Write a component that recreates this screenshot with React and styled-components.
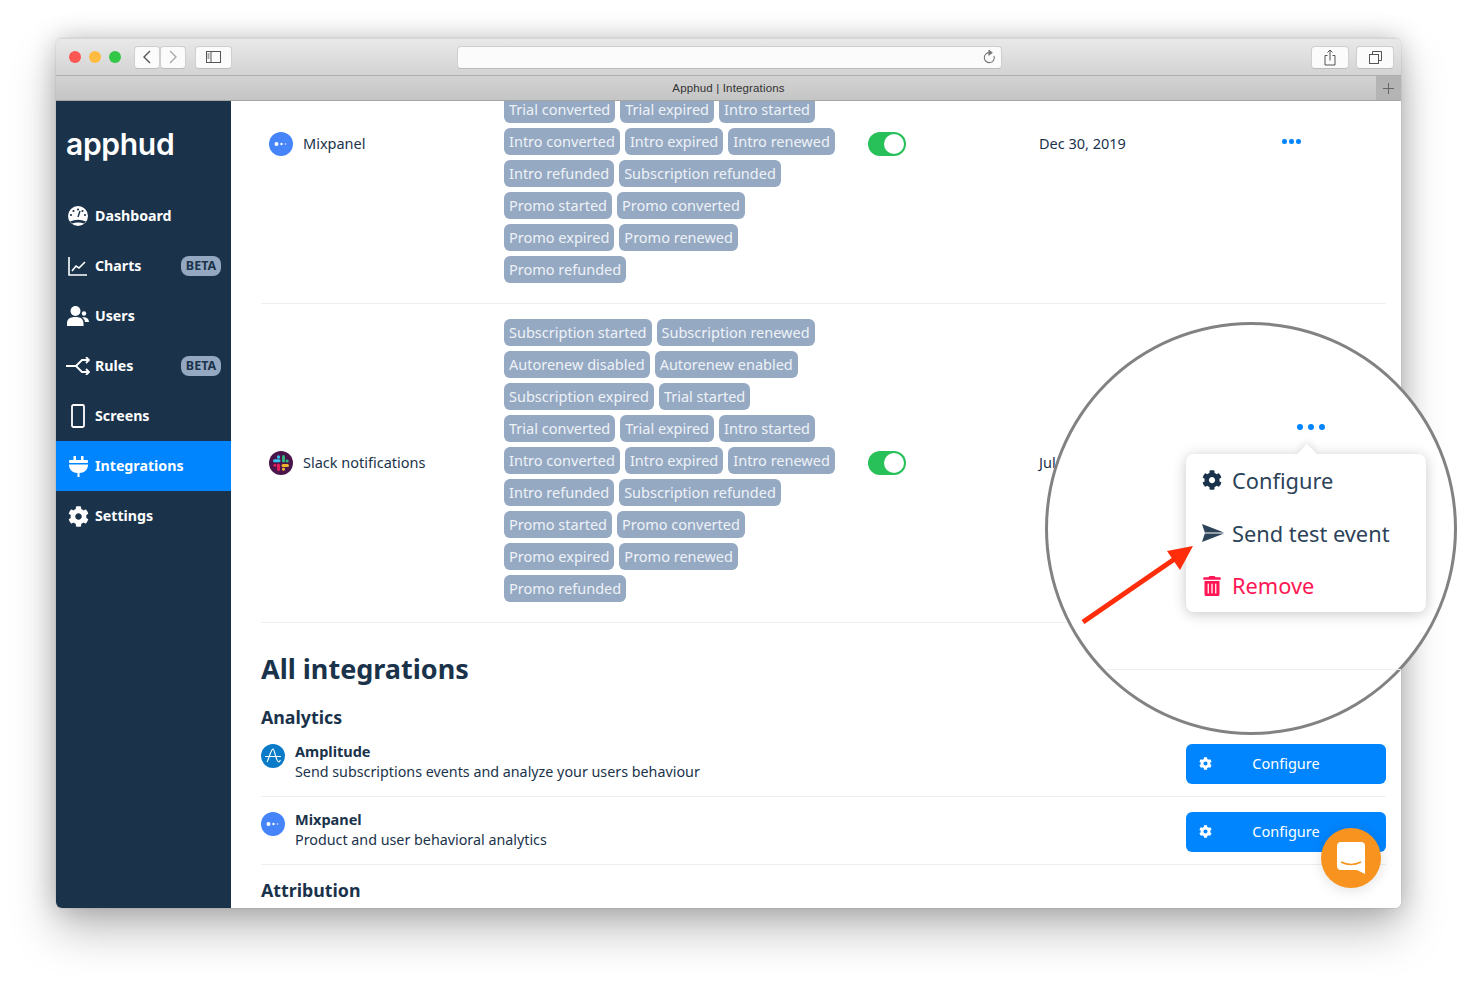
import React from "react";
import styled, { createGlobalStyle } from "styled-components";
import { FaCog, FaTrashAlt } from "react-icons/fa";

const GlobalStyle = createGlobalStyle`
  html, body {
    margin: 0;
    background: #fff;
    overflow: hidden;
  }
  * {
    box-sizing: border-box;
  }
`;

const font = `"Noto Sans", "Open Sans", sans-serif`;
const navy = "#1a334b";
const blue = "#0085ff";

const eventRows = [
  ["Subscription started", "Subscription renewed"],
  ["Autorenew disabled", "Autorenew enabled"],
  ["Subscription expired", "Trial started"],
  ["Trial converted", "Trial expired", "Intro started"],
  ["Intro converted", "Intro expired", "Intro renewed"],
  ["Intro refunded", "Subscription refunded"],
  ["Promo started", "Promo converted"],
  ["Promo expired", "Promo renewed"],
  ["Promo refunded"],
];

const navItems = [
  { label: "Dashboard", icon: <DashboardIcon /> },
  { label: "Charts", icon: <ChartIcon />, beta: true },
  { label: "Users", icon: <UsersIcon /> },
  { label: "Rules", icon: <RulesIcon />, beta: true },
  { label: "Screens", icon: <ScreenIcon /> },
  { label: "Integrations", icon: <PlugIcon />, active: true },
  { label: "Settings", icon: <FaCog size={21} /> },
];

function DashboardIcon() {
  return (
    <svg width="22" height="20" viewBox="0 0 22 20">
      <circle cx="11" cy="10" r="10" fill="#fff" />
      <path d="M3 15.5 Q11 12 19 15.5 L17 17.5 Q11 15.5 5 17.5 Z" fill={navy} />
      <g fill={navy}>
        <circle cx="11" cy="3.5" r="1.1" />
        <circle cx="6.5" cy="5" r="1.1" />
        <circle cx="15.5" cy="5" r="1.1" />
        <circle cx="4" cy="9" r="1.1" />
        <circle cx="18" cy="9" r="1.1" />
      </g>
      <path d="M11 11 L13 5" stroke={navy} strokeWidth="1.4" />
    </svg>
  );
}

function ChartIcon() {
  return (
    <svg width="20" height="20" viewBox="0 0 20 20" fill="none" stroke="#fff" strokeWidth="1.6">
      <path d="M1 1V19H19" />
      <path d="M4 15 L8 10 L11 12 L17 6" />
    </svg>
  );
}

function UsersIcon() {
  return (
    <svg width="22" height="20" viewBox="0 0 22 20" fill="#fff">
      <circle cx="8.5" cy="5" r="5" />
      <path d="M0 20 V17 C0 13 3 11 8.5 11 C14 11 16 13 16.5 17 V20 Z" />
      <circle cx="17" cy="7.5" r="2.2" />
      <path d="M15 11.5 C18 10.5 22 12 22 16 H18 C17.8 14 16.8 12.5 15 11.5Z" />
    </svg>
  );
}

function RulesIcon() {
  return (
    <svg width="24" height="18" viewBox="0 0 24 18" fill="none" stroke="#fff" strokeWidth="1.8">
      <path d="M0 9H10 L16 3H23 M10 9 L16 15H23" />
      <path d="M20 0 L23 3 L20 6 M20 12 L23 15 L20 18" />
    </svg>
  );
}

function ScreenIcon() {
  return (
    <svg width="14" height="24" viewBox="0 0 14 24" fill="none" stroke="#fff" strokeWidth="1.8">
      <rect x="1" y="1" width="12" height="22" rx="1.5" />
    </svg>
  );
}

function PlugIcon() {
  return (
    <svg width="19" height="21" viewBox="0 0 19 21" fill="#fff">
      <rect x="4.5" y="0" width="2.5" height="5" />
      <rect x="12" y="0" width="2.5" height="5" />
      <rect x="0" y="4" width="19" height="3" rx="1" />
      <path d="M0 8.5H19 C19 14 15 17 10.5 17V21H8.5V17 C4 17 0 14 0 8.5Z" />
    </svg>
  );
}

function MixpanelLogo() {
  return (
    <svg width="24" height="24" viewBox="0 0 24 24">
      <circle cx="12" cy="12" r="12" fill="#4585f9" />
      <circle cx="7.5" cy="12" r="2" fill="#fff" />
      <circle cx="12.5" cy="12" r="1.2" fill="#fff" />
      <circle cx="16.5" cy="12" r="0.7" fill="#fff" />
    </svg>
  );
}

function SlackLogo() {
  return (
    <svg width="24" height="24" viewBox="0 0 24 24" strokeWidth="3" strokeLinecap="round" fill="none">
      <circle cx="12" cy="12" r="12" fill="#4a154b" />
      <path d="M14.5 5.5V10" stroke="#2eb67d" />
      <path d="M14 14.5H18.5" stroke="#ecb22e" />
      <path d="M5.5 9.8H10" stroke="#36c5f0" />
      <path d="M9.5 14V18.5" stroke="#e01e5a" />
      <path d="M9.5 5.8V6.2" stroke="#36c5f0" />
      <path d="M18 10H18.2" stroke="#2eb67d" />
      <path d="M14.5 18V18.2" stroke="#ecb22e" />
      <path d="M5.8 14.2H6" stroke="#e01e5a" />
    </svg>
  );
}

function AmplitudeLogo() {
  return (
    <svg width="24" height="24" viewBox="0 0 24 24" fill="none">
      <circle cx="12" cy="12" r="12" fill="#0a7bc8" />
      <path d="M4 12.5H20 M6 18 C8 15 10 5 12 5 C14 5 14.5 18 18 18 L19.5 16" stroke="#fff" strokeWidth="1.2" />
    </svg>
  );
}

function SendIcon() {
  return (
    <svg width="22" height="18" viewBox="0 0 22 18" fill="#2c4359">
      <path d="M0 0 L22 8.4 H2.8 Z" />
      <path d="M0 18 L22 9.6 H2.8 Z" />
    </svg>
  );
}

const Page = styled.div`
  position: relative;
  width: 1457px;
  height: 982px;
  padding: 38px 56px 74px;
  background: #fff;
  font-family: ${font};
  color: ${navy};
  overflow: hidden;
`;

const Window = styled.div`
  width: 1345px;
  height: 870px;
  display: flex;
  flex-direction: column;
  border-radius: 6px;
  overflow: hidden;
  box-shadow: 0 22px 46px rgba(0, 0, 0, 0.26), 0 0 26px rgba(0, 0, 0, 0.2), 0 0 1px rgba(0, 0, 0, 0.4);
`;

const TitleBar = styled.div`
  height: 38px;
  flex: none;
  display: flex;
  align-items: center;
  padding: 0 0 0 13px;
  background: linear-gradient(#e9e9e9, #d3d3d3);
  border-top: 1px solid #d6d6d6;
  border-bottom: 1px solid #adadad;
`;

const Light = styled.span`
  width: 12px;
  height: 12px;
  flex: none;
  margin-right: 8px;
  border-radius: 50%;
  background: ${(p) => p.$color};
`;

const ChromeButton = styled.div`
  width: ${(p) => p.$width}px;
  height: 23px;
  margin-left: ${(p) => p.$gap || 0}px;
  flex: none;
  display: flex;
  align-items: center;
  justify-content: center;
  background: #fbfbfb;
  border: 1px solid #cfcfcf;
  border-bottom-color: #bcbcbc;
  border-radius: 4px;
`;

const AddressBar = styled(ChromeButton)`
  justify-content: flex-end;
  padding-right: 5px;
`;

const TabBar = styled.div`
  height: 25px;
  flex: none;
  position: relative;
  display: flex;
  justify-content: center;
  align-items: center;
  font-family: "Liberation Sans", sans-serif;
  font-size: 11.5px;
  letter-spacing: 0.15px;
  color: #333;
  background: linear-gradient(#d2d2d2, #c5c5c5);
  border-bottom: 1px solid #a5a5a5;
`;

const NewTab = styled.div`
  position: absolute;
  right: 0;
  top: 0;
  bottom: 0;
  width: 25px;
  display: flex;
  align-items: center;
  justify-content: center;
  background: #b4b4b4;
`;

const Body = styled.div`
  flex: 1;
  min-height: 0;
  display: flex;
`;

const Sidebar = styled.nav`
  width: 175px;
  flex: none;
  background: ${navy};
`;

const Logo = styled.div`
  height: 90px;
  padding: 23px 0 0 10px;
  font-family: Inter, sans-serif;
  font-size: 30px;
  line-height: 40px;
  font-weight: 600;
  letter-spacing: -0.3px;
  color: #fff;
`;

const NavItem = styled.div`
  height: 50px;
  display: flex;
  align-items: center;
  padding: 0 10px;
  background: ${(p) => (p.$active ? blue : "transparent")};
  color: #fff;
  font-size: 14.2px;
  font-weight: 700;
`;

const NavIcon = styled.span`
  width: 24px;
  margin-right: 5px;
  display: flex;
  justify-content: center;
`;

const NavLabel = styled.span`
  padding-bottom: 2px;
`;

const Beta = styled.span`
  margin-left: auto;
  width: 40px;
  height: 20px;
  padding-bottom: 1px;
  display: flex;
  align-items: center;
  justify-content: center;
  border-radius: 8px;
  background: #94a8c2;
  color: ${navy};
  font-size: 12.5px;
  font-weight: 700;
`;

const Content = styled.main`
  flex: 1;
  min-width: 0;
  overflow: hidden;
  background: #fff;
  padding: 0 15px 0 30px;
`;

const ScrolledList = styled.div`
  margin-top: -116px;
`;

const Row = styled.div`
  display: grid;
  grid-template-columns: 235px 364px 171px 242px auto;
  align-items: center;
  padding: 15px 0 20px 8px;
  border-bottom: 1px solid #edf0f3;
`;

const NameCell = styled.div`
  display: flex;
  align-items: center;
  gap: 10px;
  margin-top: 4px;
  font-size: 14.5px;
`;

const NameText = styled.span`
  padding-bottom: 2px;
`;

const Tags = styled.div`
  display: flex;
  flex-direction: column;
  gap: 5px;
`;

const TagRow = styled.div`
  display: flex;
  gap: 5px;
`;

const Tag = styled.span`
  height: 27px;
  padding: 0 5px 2px;
  display: flex;
  align-items: center;
  border-radius: 6px;
  background: #95a9c3;
  color: #eef2f7;
  font-size: 14.5px;
  white-space: nowrap;
`;

const Toggle = styled.div`
  width: 38px;
  height: 24px;
  margin-top: 5px;
  padding: 2px;
  display: flex;
  justify-content: flex-end;
  border-radius: 12px;
  background: #27c059;
  &::after {
    content: "";
    width: 20px;
    height: 20px;
    border-radius: 50%;
    background: #fff;
  }
`;

const DateCell = styled.div`
  margin-top: 3px;
  font-size: 14.5px;
`;

const Dots = styled.div`
  display: flex;
  gap: 2.5px;
  padding-left: 1px;
`;

const Dot = styled.span`
  width: ${(p) => p.$size}px;
  height: ${(p) => p.$size}px;
  border-radius: 50%;
  background: ${blue};
`;

const Heading = styled.h1`
  margin: 28px 0 0;
  font-size: 27px;
  line-height: 36px;
  font-weight: 700;
`;

const SectionTitle = styled.h2`
  margin: ${(p) => p.$top}px 0 0;
  font-size: 17.8px;
  line-height: 23px;
  font-weight: 700;
`;

const Integration = styled.div`
  display: flex;
  align-items: flex-start;
  padding: 15px 0 12px;
  border-bottom: 1px solid #edf0f3;
`;

const IntegrationIcon = styled.div`
  width: 34px;
  flex: none;
  display: flex;
`;

const IntegrationText = styled.div`
  flex: 1;
`;

const IntegrationName = styled.div`
  font-size: 14.5px;
  line-height: 20px;
  font-weight: 700;
  margin-top: -3px;
`;

const IntegrationDesc = styled.div`
  font-size: 14.3px;
  line-height: 21px;
`;

const ConfigureButton = styled.div`
  width: 200px;
  height: 40px;
  padding-bottom: 2px;
  position: relative;
  flex: none;
  display: flex;
  align-items: center;
  justify-content: center;
  border-radius: 6px;
  background: ${blue};
  color: #fff;
  font-size: 14.5px;
  svg {
    position: absolute;
    left: 13px;
    top: 13px;
  }
`;

const ChatBubble = styled.div`
  position: absolute;
  left: 1321px;
  top: 828px;
  width: 60px;
  height: 60px;
  display: flex;
  align-items: center;
  justify-content: center;
  border-radius: 50%;
  background: #f7931e;
  box-shadow: 0 2px 14px rgba(0, 0, 0, 0.12);
`;

const Magnifier = styled.div`
  position: absolute;
  left: 1045px;
  top: 322px;
  width: 412px;
  height: 413px;
  border-radius: 50%;
  background: #fff;
  border: 3px solid #828282;
`;

const MagnifiedRule = styled.div`
  position: absolute;
  left: 59px;
  right: 53px;
  top: 344px;
  height: 1px;
  background: #edf0f3;
`;

const MagnifiedDots = styled(Dots)`
  position: absolute;
  left: 249px;
  top: 99px;
  gap: 5px;
  padding: 0;
`;

const Popup = styled.div`
  position: absolute;
  left: 138px;
  top: 129px;
  width: 240px;
  height: 158px;
  padding: 0 16px;
  display: flex;
  flex-direction: column;
  justify-content: center;
  border-radius: 8px;
  background: #fff;
  box-shadow: 0 2px 14px rgba(0, 0, 0, 0.22);
  &::before {
    content: "";
    position: absolute;
    left: 114px;
    top: -7px;
    width: 14px;
    height: 14px;
    background: #fff;
    transform: rotate(45deg);
    box-shadow: -3px -3px 6px rgba(0, 0, 0, 0.08);
  }
`;

const MenuItem = styled.div`
  position: relative;
  height: 53px;
  display: flex;
  align-items: center;
  font-size: 21.8px;
  color: ${(p) => p.$color};
`;

const MenuIcon = styled.span`
  width: 30px;
  display: flex;
  color: ${(p) => p.$color};
`;

const Arrow = styled.svg`
  position: absolute;
  left: 33px;
  top: 219px;
`;

function IntegrationRow({ logo, name, date }) {
  return (
    <Row>
      <NameCell>
        {logo}
        <NameText>{name}</NameText>
      </NameCell>
      <Tags>
        {eventRows.map((tags) => (
          <TagRow key={tags[0]}>
            {tags.map((t) => (
              <Tag key={t}>{t}</Tag>
            ))}
          </TagRow>
        ))}
      </Tags>
      <div>
        <Toggle />
      </div>
      <DateCell>{date}</DateCell>
      <Dots>
        <Dot $size={4.5} />
        <Dot $size={4.5} />
        <Dot $size={4.5} />
      </Dots>
    </Row>
  );
}

export default function App() {
  return (
    <Page>
      <GlobalStyle />
      <Window>
        <TitleBar>
          <Light $color="#fc5753" />
          <Light $color="#fdbc40" />
          <Light $color="#33c748" />
          <ChromeButton $width={26} $gap={5}>
            <svg width="10" height="14" viewBox="0 0 10 14" fill="none" stroke="#555" strokeWidth="1.4">
              <path d="M8 1 L2 7 L8 13" />
            </svg>
          </ChromeButton>
          <ChromeButton $width={26}>
            <svg width="10" height="14" viewBox="0 0 10 14" fill="none" stroke="#aaa" strokeWidth="1.4">
              <path d="M2 1 L8 7 L2 13" />
            </svg>
          </ChromeButton>
          <ChromeButton $width={37} $gap={9}>
            <svg width="15" height="12" viewBox="0 0 15 12" fill="none" stroke="#555">
              <rect x="0.5" y="0.5" width="14" height="11" />
              <path d="M5 0.5V11.5 M1.5 3H3.5 M1.5 5H3.5 M1.5 7H3.5" />
            </svg>
          </ChromeButton>
          <AddressBar $width={545} $gap={225}>
            <svg width="14" height="15" viewBox="0 0 14 15" fill="none" stroke="#777" strokeWidth="1.1">
              <path d="M8 2.7 A5 5 0 1 0 12 6" />
              <path d="M7 0.5 L10 2.7 L7 5 Z" fill="#777" />
            </svg>
          </AddressBar>
          <ChromeButton $width={38} $gap={309}>
            <svg width="12" height="17" viewBox="0 0 12 17" fill="none" stroke="#555">
              <path d="M3.5 6.5H1V16H11V6.5H8.5 M6 11.5V1 M3.5 3.5 L6 1 L8.5 3.5" />
            </svg>
          </ChromeButton>
          <ChromeButton $width={38} $gap={7}>
            <svg width="13" height="13" viewBox="0 0 13 13" fill="none" stroke="#555">
              <rect x="0.5" y="3.5" width="9" height="9" />
              <path d="M3.5 3.5V0.5H12.5V9.5H9.5" />
            </svg>
          </ChromeButton>
        </TitleBar>
        <TabBar>
          Apphud | Integrations
          <NewTab>
            <svg width="11" height="11" viewBox="0 0 11 11" stroke="#666">
              <path d="M5.5 0V11 M0 5.5H11" />
            </svg>
          </NewTab>
        </TabBar>
        <Body>
          <Sidebar>
            <Logo>apphud</Logo>
            {navItems.map((item) => (
              <NavItem key={item.label} $active={item.active}>
                <NavIcon>{item.icon}</NavIcon>
                <NavLabel>{item.label}</NavLabel>
                {item.beta && <Beta>BETA</Beta>}
              </NavItem>
            ))}
          </Sidebar>
          <Content>
            <ScrolledList>
              <IntegrationRow logo={<MixpanelLogo />} name="Mixpanel" date="Dec 30, 2019" />
              <IntegrationRow logo={<SlackLogo />} name="Slack notifications" date="Jul 30, 2019" />
            </ScrolledList>
            <Heading>All integrations</Heading>
            <SectionTitle $top={19}>Analytics</SectionTitle>
            <Integration>
              <IntegrationIcon>
                <AmplitudeLogo />
              </IntegrationIcon>
              <IntegrationText>
                <IntegrationName>Amplitude</IntegrationName>
                <IntegrationDesc>Send subscriptions events and analyze your users behaviour</IntegrationDesc>
              </IntegrationText>
              <ConfigureButton>
                <FaCog size={13} />
                Configure
              </ConfigureButton>
            </Integration>
            <Integration>
              <IntegrationIcon>
                <MixpanelLogo />
              </IntegrationIcon>
              <IntegrationText>
                <IntegrationName>Mixpanel</IntegrationName>
                <IntegrationDesc>Product and user behavioral analytics</IntegrationDesc>
              </IntegrationText>
              <ConfigureButton>
                <FaCog size={13} />
                Configure
              </ConfigureButton>
            </Integration>
            <SectionTitle $top={14}>Attribution</SectionTitle>
          </Content>
        </Body>
      </Window>
      <Magnifier>
        <MagnifiedRule />
        <MagnifiedDots>
          <Dot $size={6} />
          <Dot $size={6} />
          <Dot $size={6} />
        </MagnifiedDots>
        <Popup>
          <MenuItem $color="#2c4359">
            <MenuIcon $color={navy}>
              <FaCog size={20} />
            </MenuIcon>
            Configure
          </MenuItem>
          <MenuItem $color="#2c4359">
            <MenuIcon $color={navy}>
              <SendIcon />
            </MenuIcon>
            Send test event
          </MenuItem>
          <MenuItem $color="#ff1654">
            <MenuIcon $color="#ff1654">
              <FaTrashAlt size={20} />
            </MenuIcon>
            Remove
          </MenuItem>
        </Popup>
        <Arrow width="114" height="80" viewBox="0 0 114 80">
          <path d="M2 78 L95 14" stroke="#ff2d0a" strokeWidth="5" />
          <path d="M112 2 L86 7 L99 26 Z" fill="#ff2d0a" />
        </Arrow>
      </Magnifier>
      <ChatBubble>
        <svg width="28" height="32" viewBox="0 0 28 32">
          <path d="M4 0H24 A4 4 0 0 1 28 4V32 L20 28H4 A4 4 0 0 1 0 24V4 A4 4 0 0 1 4 0Z" fill="#fff" />
          <path d="M4 20 Q14 25 24 20" fill="none" stroke="#f7931e" strokeWidth="1.6" />
        </svg>
      </ChatBubble>
    </Page>
  );
}
